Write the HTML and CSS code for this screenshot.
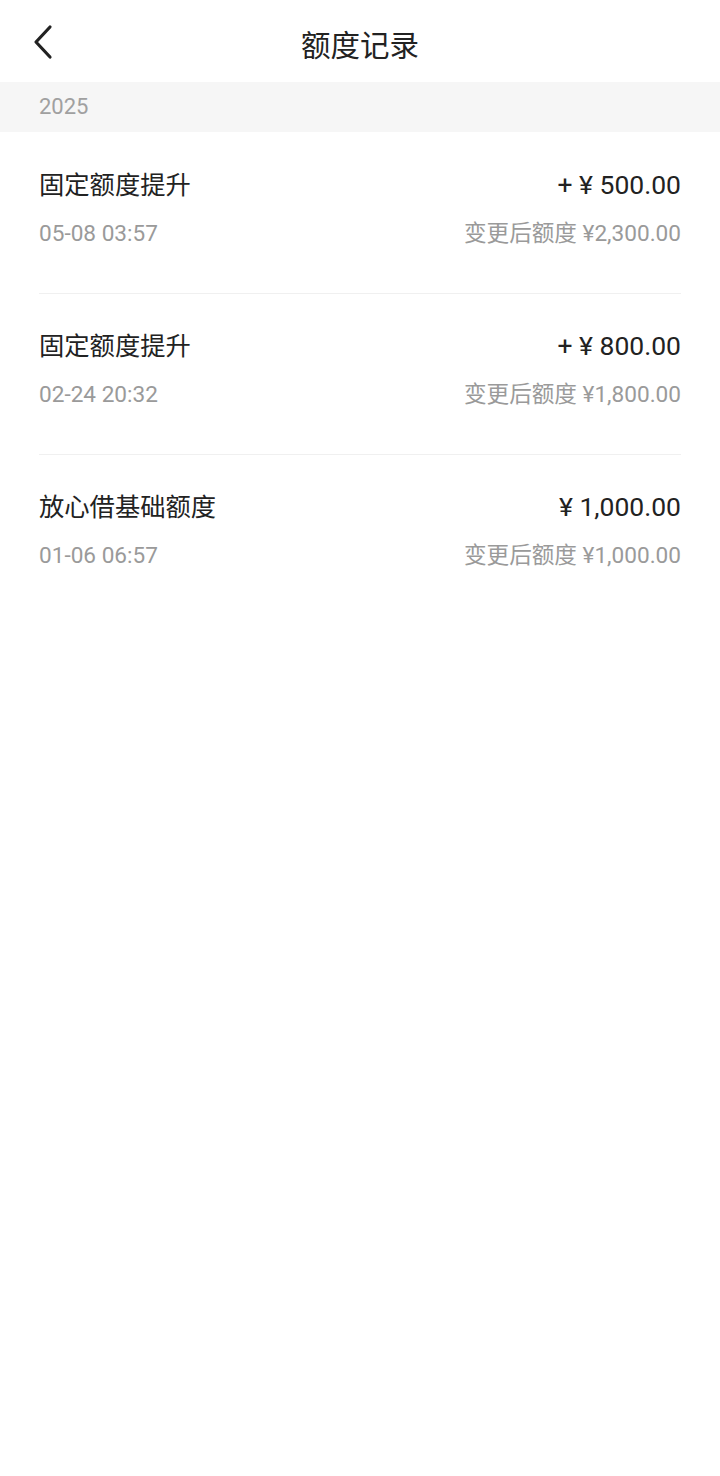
FILE: index.html
```html
<!DOCTYPE html>
<html lang="zh-CN">
<head>
    <meta charset="UTF-8">
    <meta name="viewport" content="width=device-width, initial-scale=1.0">
    <title>额度记录</title>
    <link rel="stylesheet" href="styles.css">
</head>
<body>
    <!-- Top bar -->
    <div class="header">
        <span class="back">
            <svg width="22" height="36" viewBox="0 0 22 36">
                <path d="M18 3 L4 18 L18 33" fill="none" stroke="#222" stroke-width="3.2" stroke-linecap="round" stroke-linejoin="round"/>
            </svg>
        </span>
        <h1 class="title">额度记录</h1>
    </div>

    <div class="year">2025</div>

    <!-- Records -->
    <div class="list">
        <div class="item">
            <div class="row">
                <span class="name">固定额度提升</span>
                <span class="amount">+ ¥ 500.00</span>
            </div>
            <div class="row sub">
                <span>05-08 03:57</span>
                <span>变更后额度 ¥2,300.00</span>
            </div>
        </div>
        <div class="item">
            <div class="row">
                <span class="name">固定额度提升</span>
                <span class="amount">+ ¥ 800.00</span>
            </div>
            <div class="row sub">
                <span>02-24 20:32</span>
                <span>变更后额度 ¥1,800.00</span>
            </div>
        </div>
        <div class="item">
            <div class="row">
                <span class="name">放心借基础额度</span>
                <span class="amount">¥ 1,000.00</span>
            </div>
            <div class="row sub">
                <span>01-06 06:57</span>
                <span>变更后额度 ¥1,000.00</span>
            </div>
        </div>
    </div>
</body>
</html>
```

FILE: styles.css
```css
body {
    margin: 0;
    padding: 0;
    background-color: #fff;
    font-family: Roboto, "Noto Sans CJK SC", sans-serif;
    color: #222;
}
.header {
    position: relative;
    height: 82px;
    display: flex;
    align-items: center;
    justify-content: center;
}
.back {
    position: absolute;
    left: 32px;
    top: 24px;
    display: flex;
}
.title {
    margin: 0;
    font-size: 29.5px;
    font-weight: normal;
    line-height: 36px;
    margin-top: 10px;
}
.year {
    height: 50px;
    line-height: 50px;
    padding-left: 39px;
    background-color: #f6f6f6;
    color: #a0a0a0;
    font-size: 22px;
}
.list {
    padding: 1px 39px 0;
}
.item {
    height: 161px;
    padding-top: 36px;
    box-sizing: border-box;
    border-bottom: 1px solid #f0f0f0;
}
.item:last-child {
    border-bottom: none;
}
.row {
    display: flex;
    justify-content: space-between;
    align-items: baseline;
    line-height: 32px;
}
.name {
    font-size: 25.3px;
}
.amount {
    font-size: 26.5px;
}
.sub {
    margin-top: 16px;
    font-size: 22.6px;
    color: #9a9a9a;
}
```
